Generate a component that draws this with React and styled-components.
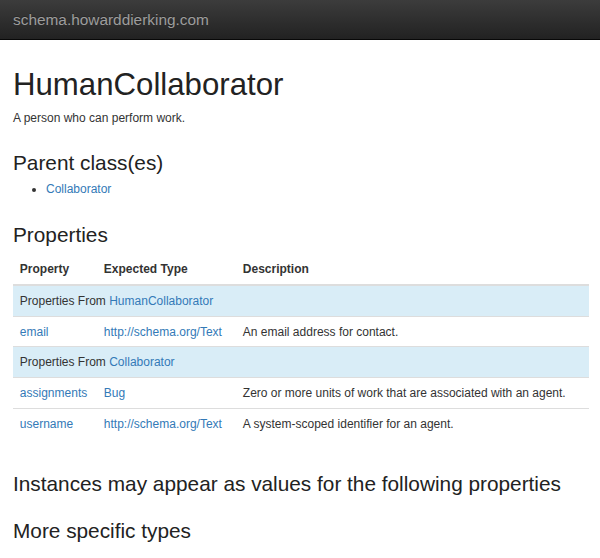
import React from 'react';
import styled, { createGlobalStyle } from 'styled-components';

const GlobalStyle = createGlobalStyle`
  html, body {
    margin: 0;
    padding: 0;
    background: #fff;
  }
  body {
    font-family: "Liberation Sans", Arial, Helvetica, sans-serif;
    font-size: 12px;
    line-height: 17.14px;
    color: #333;
  }
`;

const Navbar = styled.header`
  height: 39px;
  border-bottom: 1px solid #080808;
  background-image: linear-gradient(to bottom, #3c3c3c 0%, #222 100%);
  display: flex;
  align-items: center;
  padding: 0 13px;
`;

const Brand = styled.a`
  font-size: 15.4px;
  line-height: 39px;
  color: #9d9d9d;
  text-decoration: none;
  text-shadow: 0 -1px 0 rgba(0, 0, 0, 0.25);
`;

const Container = styled.main`
  padding: 0 11px 0 13px;
`;

const Title = styled.h1`
  margin: 28.3px 0 8px;
  font-size: 31.2px;
  line-height: 34px;
  font-weight: 500;
  color: #222;
`;

const Summary = styled.p`
  margin: 0;
`;

const SectionTitle = styled.h3`
  margin: ${props => props.$gap}px 0 0;
  font-size: 20.8px;
  line-height: 22.6px;
  font-weight: 500;
  color: #222;
`;

const ParentList = styled.ul`
  margin: 7.1px 0 0;
  padding-left: 33px;
  list-style: disc;
`;

const Link = styled.a`
  color: #337ab7;
  text-decoration: none;
`;

const Table = styled.table`
  width: 100%;
  margin-top: 8.1px;
  table-layout: fixed;
  border-collapse: collapse;
  border-spacing: 0;
`;

const HeadCell = styled.th`
  box-sizing: border-box;
  width: ${props => props.$width || 'auto'};
  padding: 6.85px;
  line-height: 16px;
  text-align: left;
  font-weight: 700;
  border-bottom: 2px solid #ddd;
`;

const Row = styled.tr`
  background: ${props => (props.$info ? '#d9edf7' : 'transparent')};
`;

const Cell = styled.td`
  padding: 6.85px;
  line-height: 16px;
  border-top: 1px solid #ddd;
  vertical-align: top;
  white-space: nowrap;
`;

const groups = [
  {
    from: 'HumanCollaborator',
    props: [
      {
        name: 'email',
        type: 'http://schema.org/Text',
        description: 'An email address for contact.',
      },
    ],
  },
  {
    from: 'Collaborator',
    props: [
      {
        name: 'assignments',
        type: 'Bug',
        description: 'Zero or more units of work that are associated with an agent.',
      },
      {
        name: 'username',
        type: 'http://schema.org/Text',
        description: 'A system-scoped identifier for an agent.',
      },
    ],
  },
];

export default function App() {
  return (
    <>
      <GlobalStyle />
      <Navbar>
        <Brand href="#">schema.howarddierking.com</Brand>
      </Navbar>
      <Container>
        <Title>HumanCollaborator</Title>
        <Summary>A person who can perform work.</Summary>

        <SectionTitle $gap={24.2}>Parent class(es)</SectionTitle>
        <ParentList>
          <li>
            <Link href="#">Collaborator</Link>
          </li>
        </ParentList>

        <SectionTitle $gap={25.2}>Properties</SectionTitle>
        <Table>
          <thead>
            <tr>
              <HeadCell $width="84px">Property</HeadCell>
              <HeadCell $width="139px">Expected Type</HeadCell>
              <HeadCell>Description</HeadCell>
            </tr>
          </thead>
          <tbody>
            {groups.map(group => (
              <React.Fragment key={group.from}>
                <Row $info>
                  <Cell colSpan={3}>
                    Properties From <Link href="#">{group.from}</Link>
                  </Cell>
                </Row>
                {group.props.map(p => (
                  <Row key={p.name}>
                    <Cell>
                      <Link href="#">{p.name}</Link>
                    </Cell>
                    <Cell>
                      <Link href="#">{p.type}</Link>
                    </Cell>
                    <Cell>{p.description}</Cell>
                  </Row>
                ))}
              </React.Fragment>
            ))}
          </tbody>
        </Table>

        <SectionTitle $gap={34.4}>
          Instances may appear as values for the following properties
        </SectionTitle>
        <SectionTitle $gap={24.7}>More specific types</SectionTitle>
      </Container>
    </>
  );
}
